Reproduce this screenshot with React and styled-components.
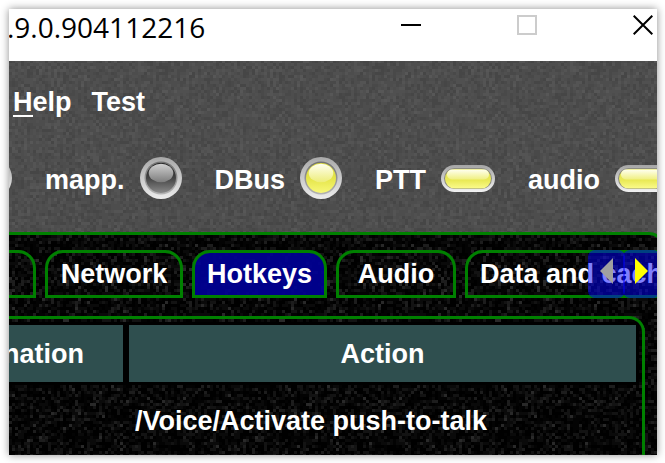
import React from 'react';
import styled, { createGlobalStyle, css } from 'styled-components';

/* Grain texture: a repeating vector tile made of square cells in random shades. */
function grainTile(seed, cells, size, base, shades) {
  let s = seed;
  const next = () => {
    s = (s * 1664525 + 1013904223) % 4294967296;
    return s / 4294967296;
  };
  const paths = shades.map(() => '');
  for (let y = 0; y < cells; y += 1) {
    for (let x = 0; x < cells; x += 1) {
      let r = next();
      for (let i = 0; i < shades.length; i += 1) {
        r -= shades[i][1];
        if (r < 0) {
          paths[i] += `M${x * size} ${y * size}h${size}v${size}h-${size}z`;
          break;
        }
      }
    }
  }
  const full = cells * size;
  const svg = `<svg xmlns="http://www.w3.org/2000/svg" width="${full}" height="${full}" shape-rendering="crispEdges"><rect width="${full}" height="${full}" fill="${base}"/>${paths
    .map((d, i) => `<path fill="${shades[i][0]}" d="${d}"/>`)
    .join('')}</svg>`;
  return `url("data:image/svg+xml,${encodeURIComponent(svg)}")`;
}

const greyGrain = grainTile(7, 72, 3, '#4d4d4d', [
  ['#464646', 0.14],
  ['#494949', 0.2],
  ['#505050', 0.22],
  ['#545454', 0.12],
  ['#575757', 0.03],
]);
const blackGrain = grainTile(19, 72, 3, '#030303', [
  ['#000000', 0.3],
  ['#0a0a0a', 0.2],
  ['#131313', 0.14],
  ['#1d1d1d', 0.07],
  ['#292929', 0.025],
]);

const green = '#008000';

const GlobalStyle = createGlobalStyle`
  *, *::before, *::after { box-sizing: border-box; }
  body { margin: 0; background: #fff; }
  button { font: inherit; color: inherit; background: none; border: 0; padding: 0; margin: 0; }
`;

const Page = styled.div`
  display: flex;
  height: 100vh;
  padding: 9px 8px 8px 9px;
`;

const Window = styled.main`
  flex: 1;
  min-width: 0;
  display: flex;
  flex-direction: column;
  overflow: hidden;
  background: ${greyGrain};
  box-shadow: 0 0 8px rgba(0, 0, 0, 0.45);
  color: #fff;
  font: bold 27px/32px 'Liberation Sans', Arial, sans-serif;
  white-space: nowrap;
`;

const TitleBar = styled.header`
  flex: none;
  display: flex;
  justify-content: space-between;
  height: 52px;
  background: #fff;
  color: #000;
`;

const Title = styled.h1`
  margin: 0 0 0 -2px;
  font: 400 28px/36px 'Open Sans', 'Segoe UI', sans-serif;
`;

const WindowControls = styled.div`
  display: flex;
  gap: 96px;
  height: 32px;
  padding-right: 4px;
`;

const ControlButton = styled.button`
  display: flex;
  align-items: center;
  color: ${({ disabled }) => (disabled ? '#cccccc' : '#000000')};
`;

const MenuBar = styled.nav`
  flex: none;
  display: flex;
  gap: 20px;
  padding: 25px 4px 0;
`;

const MenuItem = styled.button`
  line-height: 32px;
`;

const Mnemonic = styled.u`
  text-decoration: none;
  border-bottom: 2px solid #fff;
  display: inline-block;
  line-height: 26px;
`;

const StatusRow = styled.div`
  flex: none;
  display: flex;
  align-items: center;
  gap: 33px;
  height: 42px;
  margin: 39px 0 33px -39px;
`;

const StatusItem = styled.div`
  flex: none;
  display: flex;
  align-items: center;
  gap: 15px;
`;

const StatusLabel = styled.span`
  padding-top: 3px;
`;

const LampSvg = styled.svg`
  flex: none;
  display: block;
`;

const TabPane = styled.section`
  position: relative;
  flex: 1;
  min-height: 0;
  display: flex;
  flex-direction: column;
  margin-right: -8px;
  padding: 15px 20px 0 0;
  border: solid ${green};
  border-width: 3px 3px 0 0;
  border-top-right-radius: 16px;
  background: ${blackGrain};
`;

const TabList = styled.div`
  flex: none;
  display: flex;
  gap: 9px;
  margin: 0 -20px 18px -93px;
`;

const Tab = styled.button`
  flex: none;
  width: ${({ $width }) => $width}px;
  height: 48px;
  border: 3px solid ${green};
  border-radius: 18px 18px 0 0;
  text-align: center;
  ${({ $selected }) =>
    $selected &&
    css`
      background: rgba(0, 0, 150, 0.92);
    `}
`;

const TabScroller = styled.div`
  position: absolute;
  top: 15px;
  right: 2px;
  display: flex;
`;

const ScrollButton = styled.button`
  display: flex;
  align-items: center;
  justify-content: center;
  width: 37px;
  height: 48px;
  padding-bottom: 7px;
  border-radius: 7px;
  background: rgba(0, 0, 255, 0.5);

  & + & {
    margin-left: -2px;
  }
`;

const TableFrame = styled.div`
  flex: 1;
  min-height: 0;
  overflow: hidden;
  padding: 3px 3px 0 0;
  margin-right: -3px;
  border: solid ${green};
  border-width: 3px 3px 0 0;
  border-top-right-radius: 16px;
`;

const Table = styled.table`
  table-layout: fixed;
  width: calc(100% + 12px);
  margin-left: -12px;
  border-collapse: separate;
  border-spacing: 0;
`;

const HeadCell = styled.th`
  width: ${({ $width }) => $width || 'auto'};
  height: 63px;
  padding: 0 ${({ $end }) => $end || 0}px 0 0;
  border: 3px solid #000;
  background: #2f4f4f;
  text-align: ${({ $align }) => $align || 'center'};
`;

const Cell = styled.td`
  height: 72px;
  padding: 0 9px;
`;

function RoundLamp({ id, on }) {
  return (
    <LampSvg width="42" height="42" viewBox="0 0 42 42" role="img" aria-label={on ? 'on' : 'off'}>
      <defs>
        <linearGradient id={`${id}-rim`} x1="0" y1="0" x2="0" y2="1">
          <stop offset="0" stopColor="#a8a8a8" />
          <stop offset="1" stopColor="#ececec" />
        </linearGradient>
        <linearGradient id={`${id}-ring`} x1="0" y1="0" x2="0" y2="1">
          <stop offset="0" stopColor="#707070" />
          <stop offset="1" stopColor="#b4b4b4" />
        </linearGradient>
        <linearGradient id={`${id}-body`} x1="0" y1="0" x2="0" y2="1">
          <stop offset="0" stopColor={on ? '#d8d83c' : '#1c1c1c'} />
          <stop offset="0.5" stopColor={on ? '#e4e448' : '#444444'} />
          <stop offset="1" stopColor={on ? '#f8f878' : '#8a8a8a'} />
        </linearGradient>
        <linearGradient id={`${id}-gloss`} x1="0" y1="0" x2="0" y2="1">
          <stop offset="0" stopColor={on ? '#fffff0' : '#d0d0d0'} />
          <stop offset="1" stopColor={on ? '#eded78' : '#7c7c7c'} />
        </linearGradient>
      </defs>
      <circle cx="21" cy="21" r="21" fill={`url(#${id}-rim)`} />
      <circle cx="21" cy="21" r="16.5" fill={`url(#${id}-ring)`} />
      <circle cx="21" cy="21" r="15" fill={`url(#${id}-body)`} />
      <ellipse cx="21" cy="16" rx="12.3" ry="9.3" fill={`url(#${id}-gloss)`} />
    </LampSvg>
  );
}

function PillLamp({ id }) {
  return (
    <LampSvg width="54" height="27" viewBox="0 0 54 27" role="img" aria-label="on">
      <defs>
        <linearGradient id={`${id}-rim`} x1="0" y1="0" x2="0" y2="1">
          <stop offset="0" stopColor="#a4a4a4" />
          <stop offset="1" stopColor="#f2f2f2" />
        </linearGradient>
        <linearGradient id={`${id}-body`} x1="0" y1="0" x2="0" y2="1">
          <stop offset="0" stopColor="#e4e450" />
          <stop offset="0.6" stopColor="#eaea58" />
          <stop offset="1" stopColor="#fbfb8c" />
        </linearGradient>
        <linearGradient id={`${id}-gloss`} x1="0" y1="0" x2="0" y2="1">
          <stop offset="0" stopColor="#fffff0" />
          <stop offset="1" stopColor="#f0f080" />
        </linearGradient>
      </defs>
      <rect width="54" height="27" rx="13.5" fill={`url(#${id}-rim)`} />
      <rect x="3" y="3" width="48" height="21" rx="10.5" fill="#8c8c80" />
      <rect x="4" y="4" width="46" height="19.5" rx="9.7" fill={`url(#${id}-body)`} />
      <rect x="6" y="4.5" width="42" height="10" rx="5" fill={`url(#${id}-gloss)`} />
    </LampSvg>
  );
}

const statuses = [
  { label: 'mapp.', lamp: <RoundLamp id="mapp" /> },
  { label: 'DBus', lamp: <RoundLamp id="dbus" on /> },
  { label: 'PTT', lamp: <PillLamp id="ptt" /> },
  { label: 'audio', lamp: <PillLamp id="audio" /> },
];

const tabs = [
  { label: '', width: 120 },
  { label: 'Network', width: 138 },
  { label: 'Hotkeys', width: 135, selected: true },
  { label: 'Audio', width: 120 },
  { label: 'Data and cache', width: 228 },
];

export default function App() {
  return (
    <>
      <GlobalStyle />
      <Page>
        <Window>
          <TitleBar>
            <Title>.9.0.904112216</Title>
            <WindowControls>
              <ControlButton aria-label="Minimize">
                <svg width="20" height="20" viewBox="0 0 20 20">
                  <path d="M0 10h20" stroke="currentColor" strokeWidth="2" />
                </svg>
              </ControlButton>
              <ControlButton aria-label="Maximize" disabled>
                <svg width="20" height="20" viewBox="0 0 20 20">
                  <path d="M1 1h18v18H1z" fill="none" stroke="currentColor" strokeWidth="2" />
                </svg>
              </ControlButton>
              <ControlButton aria-label="Close">
                <svg width="20" height="20" viewBox="0 0 20 20">
                  <path d="M.7.7l18.6 18.6M19.3.7L.7 19.3" stroke="currentColor" strokeWidth="2" />
                </svg>
              </ControlButton>
            </WindowControls>
          </TitleBar>

          <MenuBar>
            <MenuItem>
              <Mnemonic>H</Mnemonic>elp
            </MenuItem>
            <MenuItem>Test</MenuItem>
          </MenuBar>

          <StatusRow>
            <RoundLamp id="first" />
            {statuses.map((s) => (
              <StatusItem key={s.label}>
                <StatusLabel>{s.label}</StatusLabel>
                {s.lamp}
              </StatusItem>
            ))}
          </StatusRow>

          <TabPane>
            <TabList role="tablist">
              {tabs.map((t, i) => (
                <Tab key={i} role="tab" aria-selected={!!t.selected} $selected={t.selected} $width={t.width}>
                  {t.label}
                </Tab>
              ))}
            </TabList>
            <TabScroller>
              <ScrollButton aria-label="Scroll tabs left">
                <svg width="13" height="26" viewBox="0 0 13 26">
                  <path d="M13 0v26L0 13z" fill="#a0a0a0" />
                </svg>
              </ScrollButton>
              <ScrollButton aria-label="Scroll tabs right">
                <svg width="13" height="26" viewBox="0 0 13 26">
                  <path d="M0 0v26l13-13z" fill="#ffff00" />
                </svg>
              </ScrollButton>
            </TabScroller>
            <TableFrame>
              <Table>
                <thead>
                  <tr>
                    <HeadCell $width="129px" $align="right" $end={39}>
                      nation
                    </HeadCell>
                    <HeadCell>Action</HeadCell>
                  </tr>
                </thead>
                <tbody>
                  <tr>
                    <Cell />
                    <Cell>/Voice/Activate push-to-talk</Cell>
                  </tr>
                </tbody>
              </Table>
            </TableFrame>
          </TabPane>
        </Window>
      </Page>
    </>
  );
}
